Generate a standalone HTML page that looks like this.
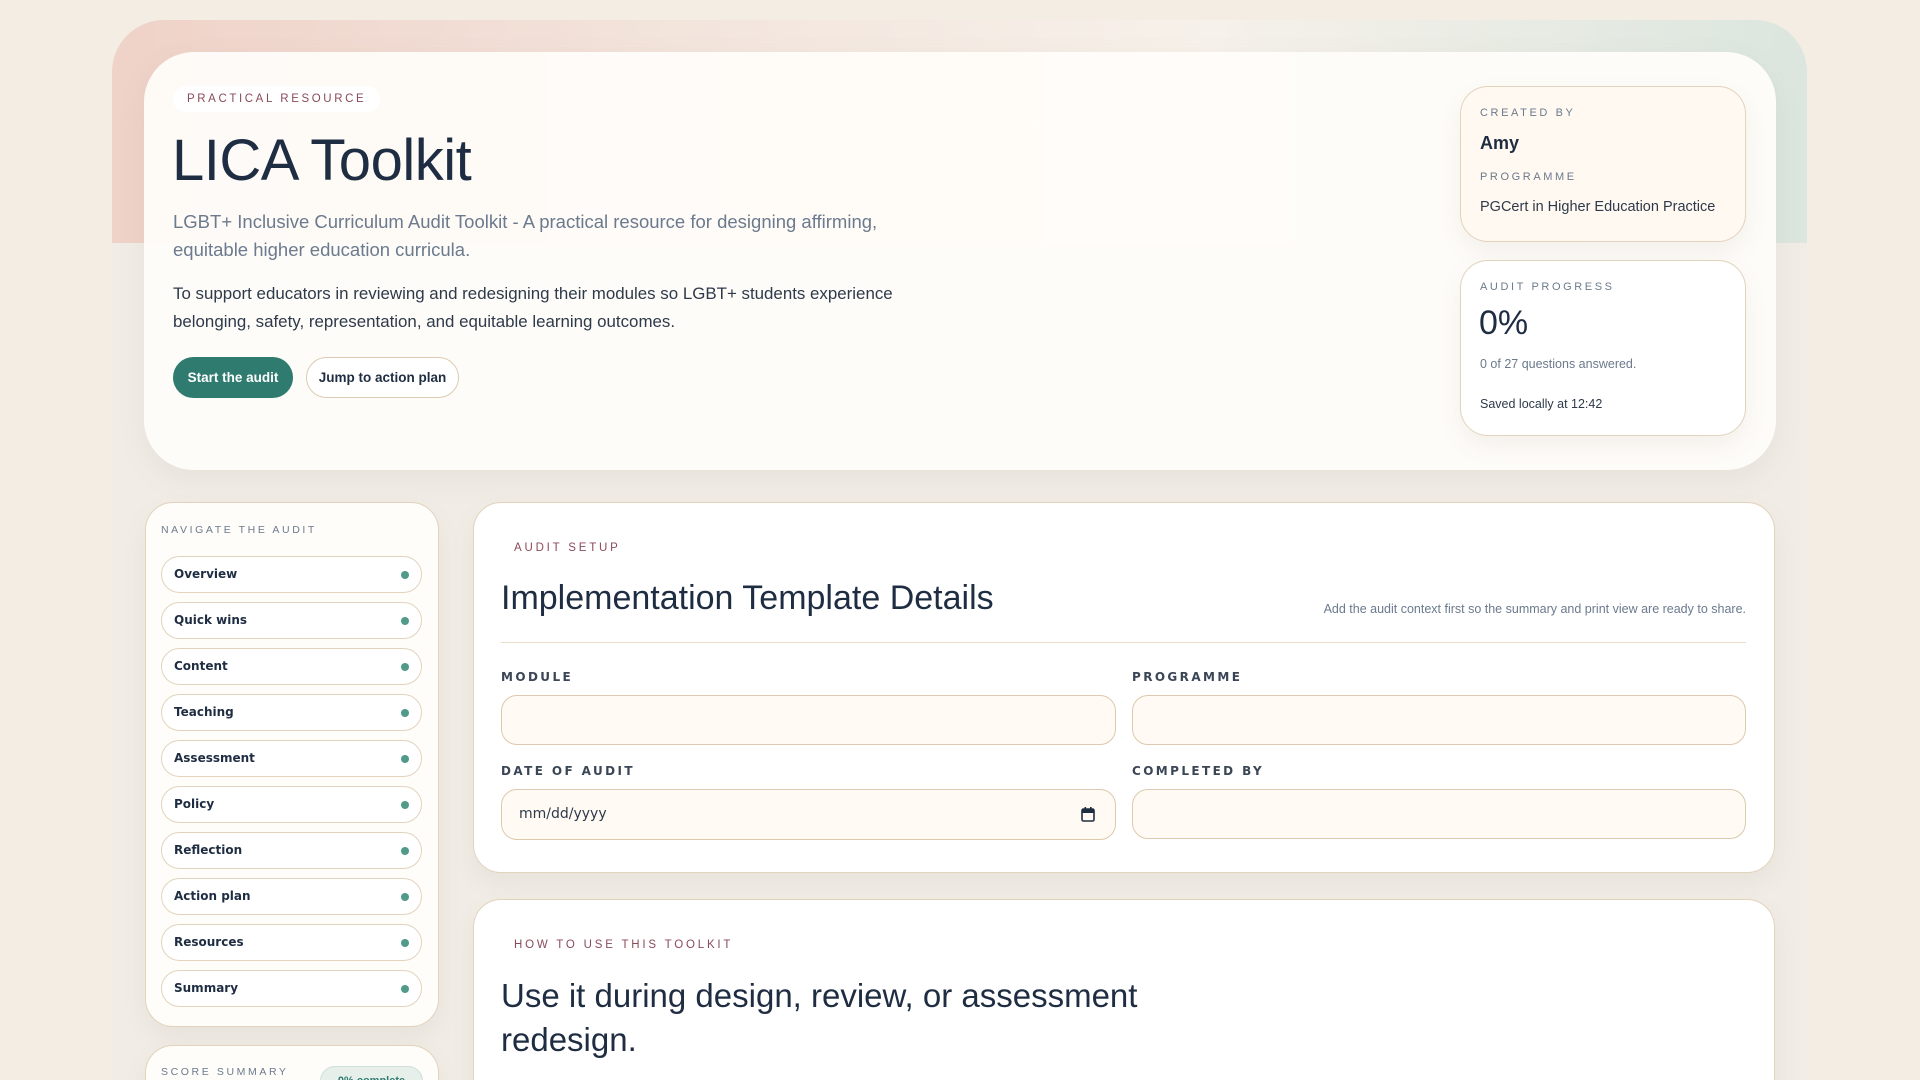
<!DOCTYPE html>
<html><head><meta charset="utf-8"><style>
*{box-sizing:border-box;margin:0;padding:0}
html,body{width:1920px;height:1080px;overflow:hidden}
body{background:#f3ede4;font-family:"Liberation Sans",sans-serif;color:#1f2d42;position:relative}
.wrap{position:absolute;left:0;top:0;width:1920px;height:1080px;overflow:hidden}
.abs{position:absolute}
.outer{left:112px;top:20px;width:1695px;height:1060px;border-radius:52px 52px 0 0;background:#f1ede6;overflow:hidden}
.band{left:0;top:0;width:100%;height:223px;background:linear-gradient(90deg,#efd2c8 0%,#f3e5dd 35%,#f6f1ea 65%,#dbe6de 100%)}
.hero{left:144px;top:52px;width:1632px;height:418px;border-radius:50px;background:rgba(255,253,250,0.93);box-shadow:0 10px 30px rgba(120,100,80,0.08)}
.pill{left:173px;top:86px;height:26px;padding:0 14px;border-radius:13px;background:#fff;color:#8a4a5a;font-size:11.5px;letter-spacing:2.6px;line-height:26px}
h1{left:172px;top:127px;font-size:58px;font-weight:400;color:#1f2d42;letter-spacing:-0.5px;white-space:nowrap}
.sub{left:173px;top:208px;font-size:18.5px;line-height:28px;color:#6b7a8d;white-space:nowrap}
.para{left:173px;top:280px;font-size:16.9px;line-height:28px;color:#2e3a4a;white-space:nowrap}
.btn{top:357px;height:41px;border-radius:21px;font-size:13.5px;font-weight:700;line-height:41px;text-align:center}
.b1{left:173px;width:120px;background:#2f7b6f;color:#fff}
.b2{left:306px;width:153px;border:1px solid #dccbb0;background:#fff;color:#1f2d42;line-height:39px}
.card{border:1px solid #e2d3bd;border-radius:28px;box-shadow:0 10px 24px rgba(120,100,80,0.08)}
.lab{font-size:11px;letter-spacing:2.6px;color:#6b7a8d}
.side{left:145px;top:502px;width:294px;height:525px;background:#fffdfa}
.nav{left:161px;width:261px;height:37px;border:1px solid #e2d3bd;border-radius:19px;background:#fff;font-family:"DejaVu Sans",sans-serif;font-weight:700;font-size:12px;line-height:35px;padding-left:12px;color:#1f2d42}
.nav:after{content:"";position:absolute;right:12px;top:14px;width:8px;height:8px;border-radius:50%;background:#4f9a8a}
.main{left:473px;top:502px;width:1302px;height:371px;background:#fff}
.flab{font-family:"DejaVu Sans",sans-serif;font-weight:700;font-size:12px;letter-spacing:2.4px;color:#3a4556}
.inp{height:50px;border:1px solid #dcc9ae;border-radius:16px;background:#fffaf3}
.rose{color:#8a4a5a;font-size:11.5px;letter-spacing:2.8px}
</style></head><body><div class="wrap">
<div class="abs outer"><div class="abs band"></div></div>
<div class="abs hero"></div>
<div class="abs pill">PRACTICAL RESOURCE</div>
<h1 class="abs">LICA Toolkit</h1>
<div class="abs sub">LGBT+ Inclusive Curriculum Audit Toolkit - A practical resource for designing affirming,<br>equitable higher education curricula.</div>
<div class="abs para">To support educators in reviewing and redesigning their modules so LGBT+ students experience<br>belonging, safety, representation, and equitable learning outcomes.</div>
<div class="abs btn b1">Start the audit</div>
<div class="abs btn b2">Jump to action plan</div>

<div class="abs card" style="left:1460px;top:86px;width:286px;height:156px;background:#fff9f2"></div>
<div class="abs lab" style="left:1480px;top:107px">CREATED BY</div>
<div class="abs" style="left:1480px;top:133px;font-size:18px;font-weight:700">Amy</div>
<div class="abs lab" style="left:1480px;top:171px">PROGRAMME</div>
<div class="abs" style="left:1480px;top:199px;font-size:14.5px;color:#2e3a4a">PGCert in Higher Education Practice</div>

<div class="abs card" style="left:1460px;top:260px;width:286px;height:176px;background:#fff"></div>
<div class="abs lab" style="left:1480px;top:281px">AUDIT PROGRESS</div>
<div class="abs" style="left:1479px;top:304px;font-size:34px;color:#1f2d42">0%</div>
<div class="abs" style="left:1480px;top:357px;font-size:12.5px;color:#6b7a8d">0 of 27 questions answered.</div>
<div class="abs" style="left:1480px;top:397px;font-size:12.5px;color:#2e3a4a">Saved locally at 12:42</div>

<div class="abs card side"></div>
<div class="abs lab" style="left:161px;top:524px;font-size:10.5px">NAVIGATE THE AUDIT</div>
<div class="abs nav" style="top:556px">Overview</div>
<div class="abs nav" style="top:602px">Quick wins</div>
<div class="abs nav" style="top:648px">Content</div>
<div class="abs nav" style="top:694px">Teaching</div>
<div class="abs nav" style="top:740px">Assessment</div>
<div class="abs nav" style="top:786px">Policy</div>
<div class="abs nav" style="top:832px">Reflection</div>
<div class="abs nav" style="top:878px">Action plan</div>
<div class="abs nav" style="top:924px">Resources</div>
<div class="abs nav" style="top:970px">Summary</div>

<div class="abs card" style="left:145px;top:1045px;width:294px;height:80px;background:#fffdfa"></div>
<div class="abs lab" style="left:161px;top:1066px;font-size:10.5px">SCORE SUMMARY</div>
<div class="abs" style="left:320px;top:1066px;width:103px;height:30px;border-radius:15px;background:#e6efe9;border:1px solid #cfe0d7;color:#2f7b6f;font-size:11px;text-align:center;line-height:28px;font-weight:700">0% complete</div>

<div class="abs card main"></div>
<div class="abs rose" style="left:514px;top:542px">AUDIT SETUP</div>
<div class="abs" style="left:501px;top:579px;font-size:34px;color:#1f2d42;white-space:nowrap">Implementation Template Details</div>
<div class="abs" style="left:1200px;top:602px;width:546px;text-align:right;font-size:12.5px;color:#6b7a8d;white-space:nowrap">Add the audit context first so the summary and print view are ready to share.</div>
<div class="abs" style="left:501px;top:642px;width:1245px;height:1px;background:#e8dcc8"></div>
<div class="abs flab" style="left:501px;top:670px">MODULE</div>
<div class="abs flab" style="left:1132px;top:670px">PROGRAMME</div>
<div class="abs inp" style="left:501px;top:695px;width:615px"></div>
<div class="abs inp" style="left:1132px;top:695px;width:614px"></div>
<div class="abs flab" style="left:501px;top:764px">DATE OF AUDIT</div>
<div class="abs flab" style="left:1132px;top:764px">COMPLETED BY</div>
<div class="abs inp" style="left:501px;top:789px;width:615px;height:51px"></div>
<div class="abs" style="left:519px;top:806px;font-family:'DejaVu Sans',sans-serif;font-size:14px;color:#2e3a4a">mm/dd/yyyy</div>
<svg class="abs" style="left:1081px;top:807px" width="14" height="15" viewBox="0 0 14 15"><rect x="1" y="2" width="12" height="12" rx="1.5" fill="none" stroke="#1f2d42" stroke-width="1.6"/><rect x="1" y="2" width="12" height="4" fill="#1f2d42"/><rect x="3.5" y="0" width="1.6" height="3" fill="#1f2d42"/><rect x="9" y="0" width="1.6" height="3" fill="#1f2d42"/></svg>
<div class="abs inp" style="left:1132px;top:789px;width:614px"></div>

<div class="abs card" style="left:473px;top:899px;width:1302px;height:220px;background:#fff"></div>
<div class="abs rose" style="left:514px;top:939px">HOW TO USE THIS TOOLKIT</div>
<div class="abs" style="left:501px;top:974px;font-size:33px;line-height:44px;color:#1f2d42;white-space:nowrap">Use it during design, review, or assessment<br>redesign.</div>
</div></body></html>
